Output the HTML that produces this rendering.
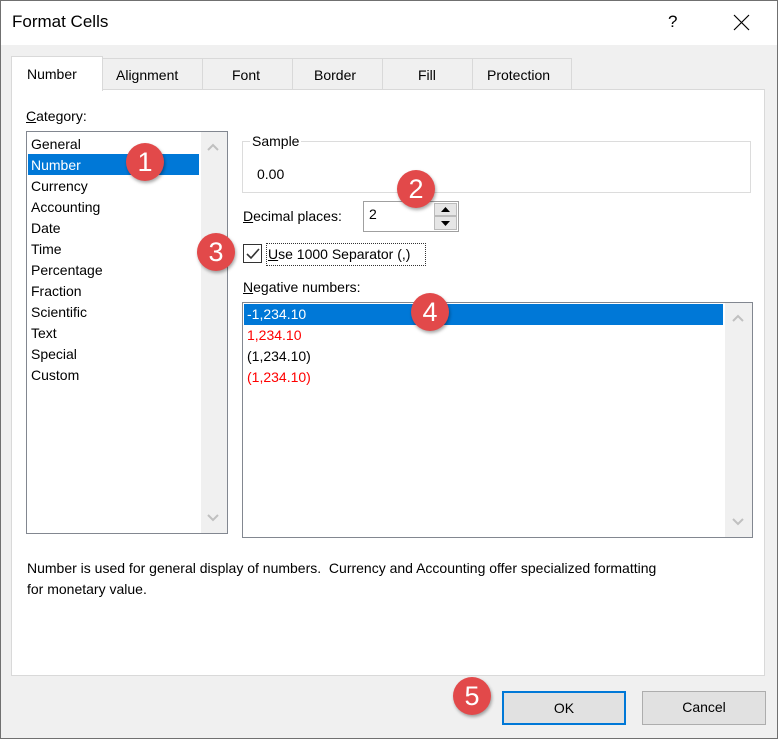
<!DOCTYPE html>
<html><head><style>
*{margin:0;padding:0;box-sizing:border-box}
body{width:778px;height:739px;background:#f0f0f0;font-family:"Liberation Sans",sans-serif;font-size:14px;color:#000;position:relative;overflow:hidden}
.a{position:absolute}
.t{position:absolute;white-space:nowrap}
.c{position:absolute;width:38px;height:38px;border-radius:50%;background:#e2494a;color:#fff;font-size:27px;text-align:center;line-height:38px;box-shadow:1px 2px 3px rgba(0,0,0,.35)}
.btn{position:absolute;background:#e1e1e1;border:1px solid #adadad;text-align:center;line-height:31px}
</style></head><body>
<div class="a" style="left:0;top:0;width:778px;height:739px;border:1px solid #707070"></div>
<div class="a" style="left:1px;top:1px;width:776px;height:44px;background:#fff"></div>
<div class="t" style="left:12px;top:12px;font-size:17px">Format Cells</div>
<div class="t" style="left:668px;top:12px;font-size:17px">?</div>
<svg class="a" style="left:733px;top:14px" width="17" height="17"><path d="M1 1L16 16M16 1L1 16" stroke="#000" stroke-width="1.2"/></svg>
<!-- tabs -->
<div class="a" style="left:102px;top:58px;width:470px;height:32px;border:1px solid #d9d9d9;border-bottom:none;background:#f0f0f0"></div>
<div class="a" style="left:202px;top:58px;width:1px;height:31px;background:#d9d9d9"></div>
<div class="a" style="left:292px;top:58px;width:1px;height:31px;background:#d9d9d9"></div>
<div class="a" style="left:382px;top:58px;width:1px;height:31px;background:#d9d9d9"></div>
<div class="a" style="left:472px;top:58px;width:1px;height:31px;background:#d9d9d9"></div>
<div class="t" style="left:116px;top:67px">Alignment</div>
<div class="t" style="left:232px;top:67px">Font</div>
<div class="t" style="left:314px;top:67px">Border</div>
<div class="t" style="left:418px;top:67px">Fill</div>
<div class="t" style="left:487px;top:67px">Protection</div>
<div class="a" style="left:11px;top:89px;width:754px;height:587px;background:#fff;border:1px solid #d9d9d9"></div>
<div class="a" style="left:11px;top:56px;width:92px;height:35px;background:#fff;border:1px solid #d9d9d9;border-bottom:none"></div>
<div class="t" style="left:27px;top:66px">Number</div>
<div class="t" style="left:26px;top:108px"><u>C</u>ategory:</div>
<!-- category list -->
<div class="a" style="left:26px;top:131px;width:202px;height:403px;border:1px solid #828790;background:#fff"></div>
<div class="a" style="left:201px;top:132px;width:26px;height:401px;background:#f0f0f0"></div>
<svg class="a" style="left:206px;top:142px" width="14" height="10"><path d="M2 8L7 3L12 8" stroke="#c0c0c0" stroke-width="2" fill="none"/></svg>
<svg class="a" style="left:206px;top:513px" width="14" height="10"><path d="M2 2L7 7L12 2" stroke="#c0c0c0" stroke-width="2" fill="none"/></svg>
<div class="a" style="left:28px;top:154px;width:171px;height:21px;background:#0078d7"></div>
<div class="a" style="left:31px;top:134px;line-height:21px">General<br><span style="color:#fff">Number</span><br>Currency<br>Accounting<br>Date<br>Time<br>Percentage<br>Fraction<br>Scientific<br>Text<br>Special<br>Custom</div>
<!-- sample -->
<div class="a" style="left:242px;top:141px;width:509px;height:52px;border:1px solid #dcdcdc"></div>
<div class="t" style="left:250px;top:133px;background:#fff;padding:0 2px">Sample</div>
<div class="t" style="left:257px;top:166px">0.00</div>
<div class="t" style="left:243px;top:208px"><u>D</u>ecimal places:</div>
<div class="a" style="left:363px;top:201px;width:96px;height:31px;border:1px solid #a0a0a0;background:#fff"></div>
<div class="t" style="left:369px;top:206px">2</div>
<div class="a" style="left:434px;top:203px;width:23px;height:13px;background:#e6e6e6;border:1px solid #bbb"></div>
<div class="a" style="left:434px;top:216px;width:23px;height:14px;background:#e6e6e6;border:1px solid #bbb"></div>
<svg class="a" style="left:440px;top:206px" width="11" height="22"><path d="M1 6L5.5 1L10 6Z M1 15L5.5 20L10 15Z" fill="#000"/></svg>
<div class="a" style="left:243px;top:244px;width:19px;height:19px;border:1px solid #333;background:#fff"></div>
<svg class="a" style="left:245px;top:246px" width="16" height="16"><path d="M2 8L6 12L14 3" stroke="#333" stroke-width="1.6" fill="none"/></svg>
<div class="a" style="left:266px;top:243px;width:160px;height:23px;border:1px dotted #333"></div>
<div class="t" style="left:268px;top:246px"><u>U</u>se 1000 Separator (,)</div>
<div class="t" style="left:243px;top:279px"><u>N</u>egative numbers:</div>
<div class="a" style="left:242px;top:302px;width:511px;height:236px;border:1px solid #828790;background:#fff"></div>
<div class="a" style="left:725px;top:303px;width:27px;height:234px;background:#f0f0f0"></div>
<svg class="a" style="left:731px;top:313px" width="14" height="10"><path d="M2 8L7 3L12 8" stroke="#c0c0c0" stroke-width="2" fill="none"/></svg>
<svg class="a" style="left:731px;top:517px" width="14" height="10"><path d="M2 2L7 7L12 2" stroke="#c0c0c0" stroke-width="2" fill="none"/></svg>
<div class="a" style="left:244px;top:304px;width:479px;height:21px;background:#0078d7"></div>
<div class="a" style="left:247px;top:304px;line-height:21px"><span style="color:#fff">-1,234.10</span><br><span style="color:#f00">1,234.10</span><br>(1,234.10)<br><span style="color:#f00">(1,234.10)</span></div>
<div class="a" style="left:27px;top:558px;line-height:21px;white-space:nowrap">Number is used for general display of numbers.&nbsp; Currency and Accounting offer specialized formatting<br>for monetary value.</div>
<div class="btn" style="left:502px;top:691px;width:124px;height:34px;border:2px solid #0078d7;line-height:30px">OK</div>
<div class="btn" style="left:642px;top:691px;width:124px;height:34px">Cancel</div>
<div class="c" style="left:126px;top:143px">1</div>
<div class="c" style="left:397px;top:170px">2</div>
<div class="c" style="left:197px;top:233px">3</div>
<div class="c" style="left:411px;top:293px">4</div>
<div class="c" style="left:453px;top:677px">5</div>
</body></html>
